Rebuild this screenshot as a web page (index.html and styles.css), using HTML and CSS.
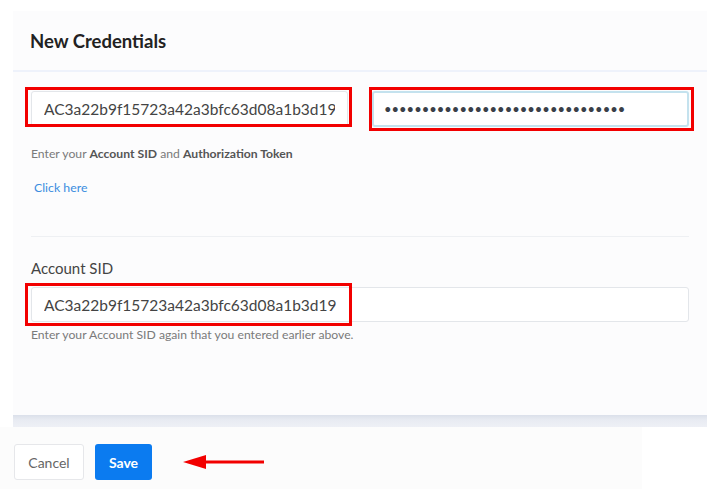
FILE: index.html
```html
<!DOCTYPE html>
<html lang="en">
    <head>
        <meta charset="UTF-8">
        <meta name="viewport" content="width=device-width, initial-scale=1.0">
        <title>New Credentials</title>
        <link rel="stylesheet" href="styles.css">
    </head>
<body>
    <div class="panel">
        <header class="panel-head">
            <h2>New Credentials</h2>
        </header>
        <div class="panel-body">
            <section class="group first">
                <div class="row">
                    <div class="field">
                        <input type="text" class="input" value="AC3a22b9f15723a42a3bfc63d08a1b3d19">
                        <span class="mark mark-a"></span>
                    </div>
                    <div class="field">
                        <input type="password" class="input focus" value="abcdefghijklmnopqrstuvwxyz012345">
                        <span class="mark mark-b"></span>
                    </div>
                </div>
                <p class="help">Enter your <b>Account SID</b> and <b>Authorization Token</b></p>
                <a href="#" class="link">Click here</a>
            </section>
            <section class="group second">
                <label for="sid" class="label">Account SID</label>
                <div class="field">
                    <input type="text" id="sid" class="input" value="AC3a22b9f15723a42a3bfc63d08a1b3d19">
                    <span class="mark mark-c"></span>
                </div>
                <p class="help small">Enter your Account SID again that you entered earlier above.</p>
            </section>
        </div>
        <div class="panel-shadow"></div>
    </div>
    <footer class="actions">
        <button class="btn btn-cancel">Cancel</button>
        <button class="btn btn-save">Save</button>
        <svg class="arrow" width="84" height="18" viewBox="0 0 84 18">
            <polygon points="1,9 24,2 24,16" fill="#f20000"/>
            <rect x="22" y="7.5" width="60" height="3" fill="#f20000"/>
        </svg>
    </footer>
</body>
</html>
```

FILE: styles.css
```css
body {
    font-family: Lato, "Open Sans", sans-serif;
    margin: 0;
    padding: 11px 0 0;
    background-color: #ffffff;
    color: #333;
}
.panel {
    width: 694px;
    margin-left: 13px;
    background-color: #fcfcfd;
}
.panel-head {
    height: 59px;
    display: flex;
    align-items: center;
    padding: 0 17px;
    border-bottom: 2px solid #eef2fb;
}
.panel-head h2 {
    margin: 0;
    font-size: 18.5px;
    font-weight: 700;
    color: #222;
}
.panel-body {
    padding: 0 18px;
}
.group.first {
    padding: 19px 0 40px;
}
.group.second {
    border-top: 1px solid #eef0f3;
    padding: 21px 0 73px;
}
.row {
    display: grid;
    grid-template-columns: 1fr 1fr;
    gap: 24px;
}
.field {
    position: relative;
}
.input {
    display: block;
    box-sizing: border-box;
    width: 100%;
    height: 36px;
    padding: 0 12px;
    border: 1px solid #e3e6ea;
    border-radius: 3px;
    background-color: #fff;
    font-family: Lato, "Open Sans", sans-serif;
    font-size: 15.5px;
    color: #444;
}
.input.focus {
    border: 2px solid #c4e2ee;
    padding: 0 10px;
    letter-spacing: 0;
    font-size: 13px;
    color: #3a3f48;
}
.second .input {
    height: 35px;
}
.mark {
    position: absolute;
    border: 3px solid #f20000;
    box-sizing: border-box;
    pointer-events: none;
}
.mark-a {
    left: -6px;
    top: -4px;
    width: 327px;
    height: 40px;
}
.mark-b {
    left: -3px;
    top: -4px;
    width: 325px;
    height: 44px;
}
.mark-c {
    left: -6px;
    top: -4px;
    width: 327px;
    height: 43px;
}
.help {
    margin: 19px 0 0;
    font-size: 12.2px;
    line-height: 15px;
    color: #7a7a7a;
}
.help b {
    font-weight: 700;
    color: #555;
}
.help.small {
    margin-top: 5px;
}
.link {
    display: block;
    margin: 19px 0 0 3px;
    font-size: 12.3px;
    line-height: 16px;
    color: #3a8ddf;
    text-decoration: none;
}
.label {
    display: block;
    font-size: 15px;
    line-height: 20px;
    color: #444;
    margin-bottom: 9px;
}
.panel-shadow {
    height: 12px;
    background: linear-gradient(#dbe0ea, #e8ebf2 40%, #eef0f6);
}
.actions {
    width: 642px;
    height: 62px;
    box-sizing: border-box;
    padding: 17px 14px 0;
    background-color: #fcfcfc;
    display: flex;
    align-items: flex-start;
}
.btn {
    height: 36px;
    border-radius: 3px;
    font-family: Lato, "Open Sans", sans-serif;
    font-size: 14px;
    cursor: pointer;
}
.btn-cancel {
    width: 70px;
    background-color: #fff;
    border: 1px solid #e6e7ea;
    color: #666;
}
.btn-save {
    width: 57px;
    margin-left: 11px;
    background-color: #0b7bf0;
    border: none;
    color: #fff;
    font-weight: 700;
}
.arrow {
    margin: 9px 0 0 30px;
}
```
